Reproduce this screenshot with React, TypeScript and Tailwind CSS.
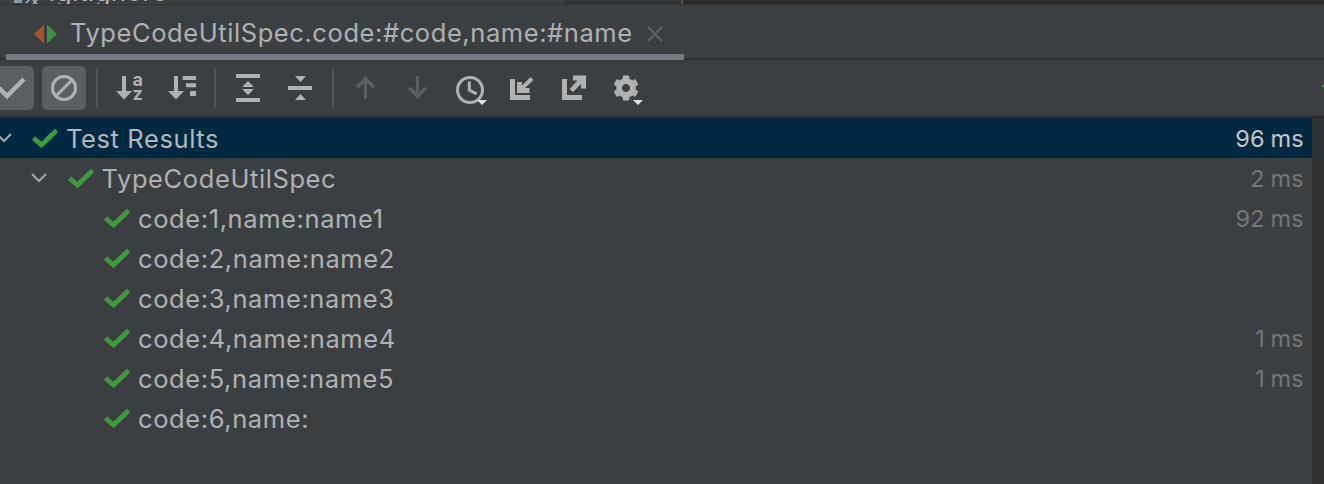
// App.tsx
import { FaCog } from "react-icons/fa"

const font = { fontFamily: "Inter, 'Noto Sans', sans-serif" }

function Check({ className = "" }: { className?: string }) {
    return (
        <svg width="26" height="20" viewBox="0 0 26 20" className={className}>
            <path d="M1.5 10 L9.5 17 L24.5 2.5" fill="none" stroke="#3d9a3d" strokeWidth="4.8" />
        </svg>
    )
}

function Chevron({ className = "" }: { className?: string }) {
    return (
        <svg width="18" height="12" viewBox="0 0 18 12" className={className}>
            <path d="M2 2 L9 9 L16 2" fill="none" stroke="#a4a6a8" strokeWidth="2" />
        </svg>
    )
}

function Sep({ className = "" }: { className?: string }) {
    return <div className={`w-[2px] h-[39px] bg-[#515355] ${className}`} />
}

function Btn({ children }: { children: React.ReactNode }) {
    return (
        <div className="w-[44px] h-[44px] flex items-center justify-center rounded-[6px] bg-[#5b5f62]">
            {children}
        </div>
    )
}

function Icon({ d, color = "#afb1b3" }: { d: string; color?: string }) {
    return (
        <svg width="36" height="36" viewBox="0 0 36 36">
            <path d={d} fill={color} />
        </svg>
    )
}

function Caret() {
    return <div className="absolute right-[1px] bottom-[1px] w-0 h-0 border-x-[5px] border-x-transparent border-t-[5px] border-t-[#dfe1e2]" />
}

function Row({ indent, label, time, chevron }: { indent: string; label: string; time?: string; chevron?: boolean }) {
    return (
        <div className={`h-[40px] flex items-center ${indent}`}>
            {chevron && <Chevron className="mr-[19.5px]" />}
            <Check className="mr-[8px]" />
            <span className="pt-[2px] text-[25.5px] tracking-[0.6px] text-[#afb1b3]">{label}</span>
            {time && <span className="ml-auto pr-[8px] pt-[2px] text-[23.5px] tracking-[0.3px] [word-spacing:-1.5px] text-[#747678]">{time}</span>}
        </div>
    )
}

export default function App() {
    const rows = [
        { label: "code:1,name:name1", time: "92 ms" },
        { label: "code:2,name:name2" },
        { label: "code:3,name:name3" },
        { label: "code:4,name:name4", time: "1 ms" },
        { label: "code:5,name:name5", time: "1 ms" },
        { label: "code:6,name:" },
    ]

    return (
        <div className="w-[1324px] h-[484px] overflow-hidden flex flex-col bg-[#3c3f41]" style={font}>
            {/* editor tabs above, only the bottom edge shows */}
            <div className="h-[5px] shrink-0 flex border-b border-[#323232] overflow-hidden">
                <div className="w-[564px] flex items-start pl-[14px]">
                    <div className="w-[8px] h-[3px] bg-[#8a9ba8]" />
                    <svg width="14" height="4" viewBox="0 0 14 4" className="ml-[2px]">
                        <path d="M2 3 L5 0 M9 0 L13 4 M13 0 L9 4" stroke="#a9b7c6" strokeWidth="1.5" />
                    </svg>
                    <div className="ml-[10px] -mt-[22px] text-[25.5px] leading-[28px] tracking-[0.6px] text-[#b8bcc0]">.gitignore</div>
                </div>
                <div className="w-[117px] bg-[#313335]" />
                <div className="w-[2px] bg-[#55585a]" />
                <div className="flex-1 bg-[#2b2b2b]" />
            </div>

            {/* tab bar */}
            <div className="h-[55px] shrink-0 border-b-2 border-[#323232]">
                <div className="w-[678px] h-[55px] ml-[6px] border-b-[6px] border-[#747a80] flex items-center pl-[27px] pt-[8px]">
                    <svg width="26" height="20" viewBox="0 0 26 20" className="mr-[11px]">
                        <path d="M11 0.5 L1 10 L11 19.5 Z" fill="#a8512c" />
                        <path d="M14 0.5 L24 10 L14 19.5 Z" fill="#3f8f3f" />
                    </svg>
                    <span className="text-[25.5px] tracking-[0.58px] text-[#afb1b3]">TypeCodeUtilSpec.code:#code,name:#name</span>
                    <svg width="18" height="18" viewBox="0 0 18 18" className="ml-[13px]">
                        <path d="M2 2 L16 16 M16 2 L2 16" stroke="#5f6365" strokeWidth="2" />
                    </svg>
                </div>
            </div>

            {/* toolbar */}
            <div className="h-[58px] shrink-0 flex items-center border-b-2 border-[#2b2d2e] relative">
                <div className="flex items-center gap-[8px] -ml-[10px]">
                    <Btn>
                        <svg width="28" height="24" viewBox="0 0 28 24">
                            <path d="M1 12 L9 20 L26 3" fill="none" stroke="#afb1b3" strokeWidth="4.5" />
                        </svg>
                    </Btn>
                    <Btn>
                        <svg width="28" height="28" viewBox="0 0 28 28">
                            <circle cx="14" cy="14" r="11.5" fill="none" stroke="#afb1b3" strokeWidth="3" />
                            <path d="M7 21 L21 7" stroke="#afb1b3" strokeWidth="3" />
                        </svg>
                    </Btn>
                </div>
                <Sep className="ml-[10px]" />
                <div className="flex items-center gap-[16px] ml-[15px]">
                    <svg width="36" height="36" viewBox="0 0 36 36">
                        <path d="M9 6 H13 V21 H19 L11 29.5 L3 21 H9 Z" fill="#afb1b3" />
                        <text x="19.5" y="16" fontSize="18" fontWeight="700" fill="#afb1b3">a</text>
                        <text x="19.5" y="30" fontSize="18" fontWeight="700" fill="#afb1b3">z</text>
                    </svg>
                    <Icon d="M9 6 H13 V21 H19 L11 29.5 L3 21 H9 Z M17.7 6 H31 V10 H17.7 Z M21 13.3 H31 V17.3 H21 Z M25 21 H31 V26 H25 Z" />
                </div>
                <Sep className="ml-[13px]" />
                <div className="flex items-center gap-[16px] ml-[14px]">
                    <Icon d="M6 4 H30 V8 H6 Z M6 28 H30 V32 H6 Z M18 11 L24 17 H12 Z M12 19 H24 L18 25 Z" />
                    <Icon d="M13 6 H24 L18.5 12 Z M6 16 H30 V20 H6 Z M18.5 24 L24 30 H13 Z" />
                </div>
                <Sep className="ml-[14px]" />
                <div className="flex items-center gap-[16px] ml-[14px]">
                    <Icon color="#5c5f61" d="M16 29 V13 L10.5 18.5 L8 16 L17.5 6 L27 16 L24.5 18.5 L19 13 V29 Z" />
                    <Icon color="#5c5f61" d="M16 6 V22 L10.5 16.5 L8 19 L17.5 29 L27 19 L24.5 16.5 L19 22 V6 Z" />
                    <div className="relative w-[36px] h-[36px]">
                        <svg width="36" height="36" viewBox="0 0 36 36">
                            <circle cx="18" cy="20" r="12.5" fill="none" stroke="#afb1b3" strokeWidth="3" />
                            <path d="M17.3 11.5 V20 L24.7 24" fill="none" stroke="#afb1b3" strokeWidth="3" />
                        </svg>
                        <Caret />
                    </div>
                    <Icon d="M6 9 H11 V25 H26 V30 H6 Z M13 12 H18 V15.5 L26.5 7 L29.5 10 L21 18 H25.5 V23 H13 Z" />
                    <Icon d="M6 9 H11 V25 H26 V30 H6 Z M17 5.5 H30 V18.5 H25 V14 L17 22 L13.5 19 L21.5 10.5 H17 Z" />
                    <div className="relative w-[36px] h-[36px] flex items-center justify-center">
                        <FaCog size={26} color="#afb1b3" />
                        <Caret />
                    </div>
                </div>
                <div className="absolute right-0 top-[25px] w-[2px] h-[2px] bg-[#3d9a3d]" />
            </div>

            {/* results tree */}
            <div className="flex-1 flex">
                <div className="flex-1">
                    <div className="h-[40px] flex items-center bg-[#022942]">
                        <Chevron className="-ml-[5px] mr-[18.5px]" />
                        <Check className="mr-[8.5px]" />
                        <span className="pt-[2px] text-[25.5px] tracking-[0.6px] text-[#b4b7b9]">Test Results</span>
                        <span className="ml-auto pr-[8px] pt-[2px] text-[23.5px] tracking-[0.3px] [word-spacing:-1.5px] text-[#c3c5c7]">96 ms</span>
                    </div>
                    <Row indent="pl-[30px]" label="TypeCodeUtilSpec" time="2 ms" chevron />
                    {rows.map((r) => (
                        <Row key={r.label} indent="pl-[104px]" label={r.label} time={r.time} />
                    ))}
                </div>
                <div className="w-[12px] bg-[#2f3132]" />
            </div>
        </div>
    )
}
